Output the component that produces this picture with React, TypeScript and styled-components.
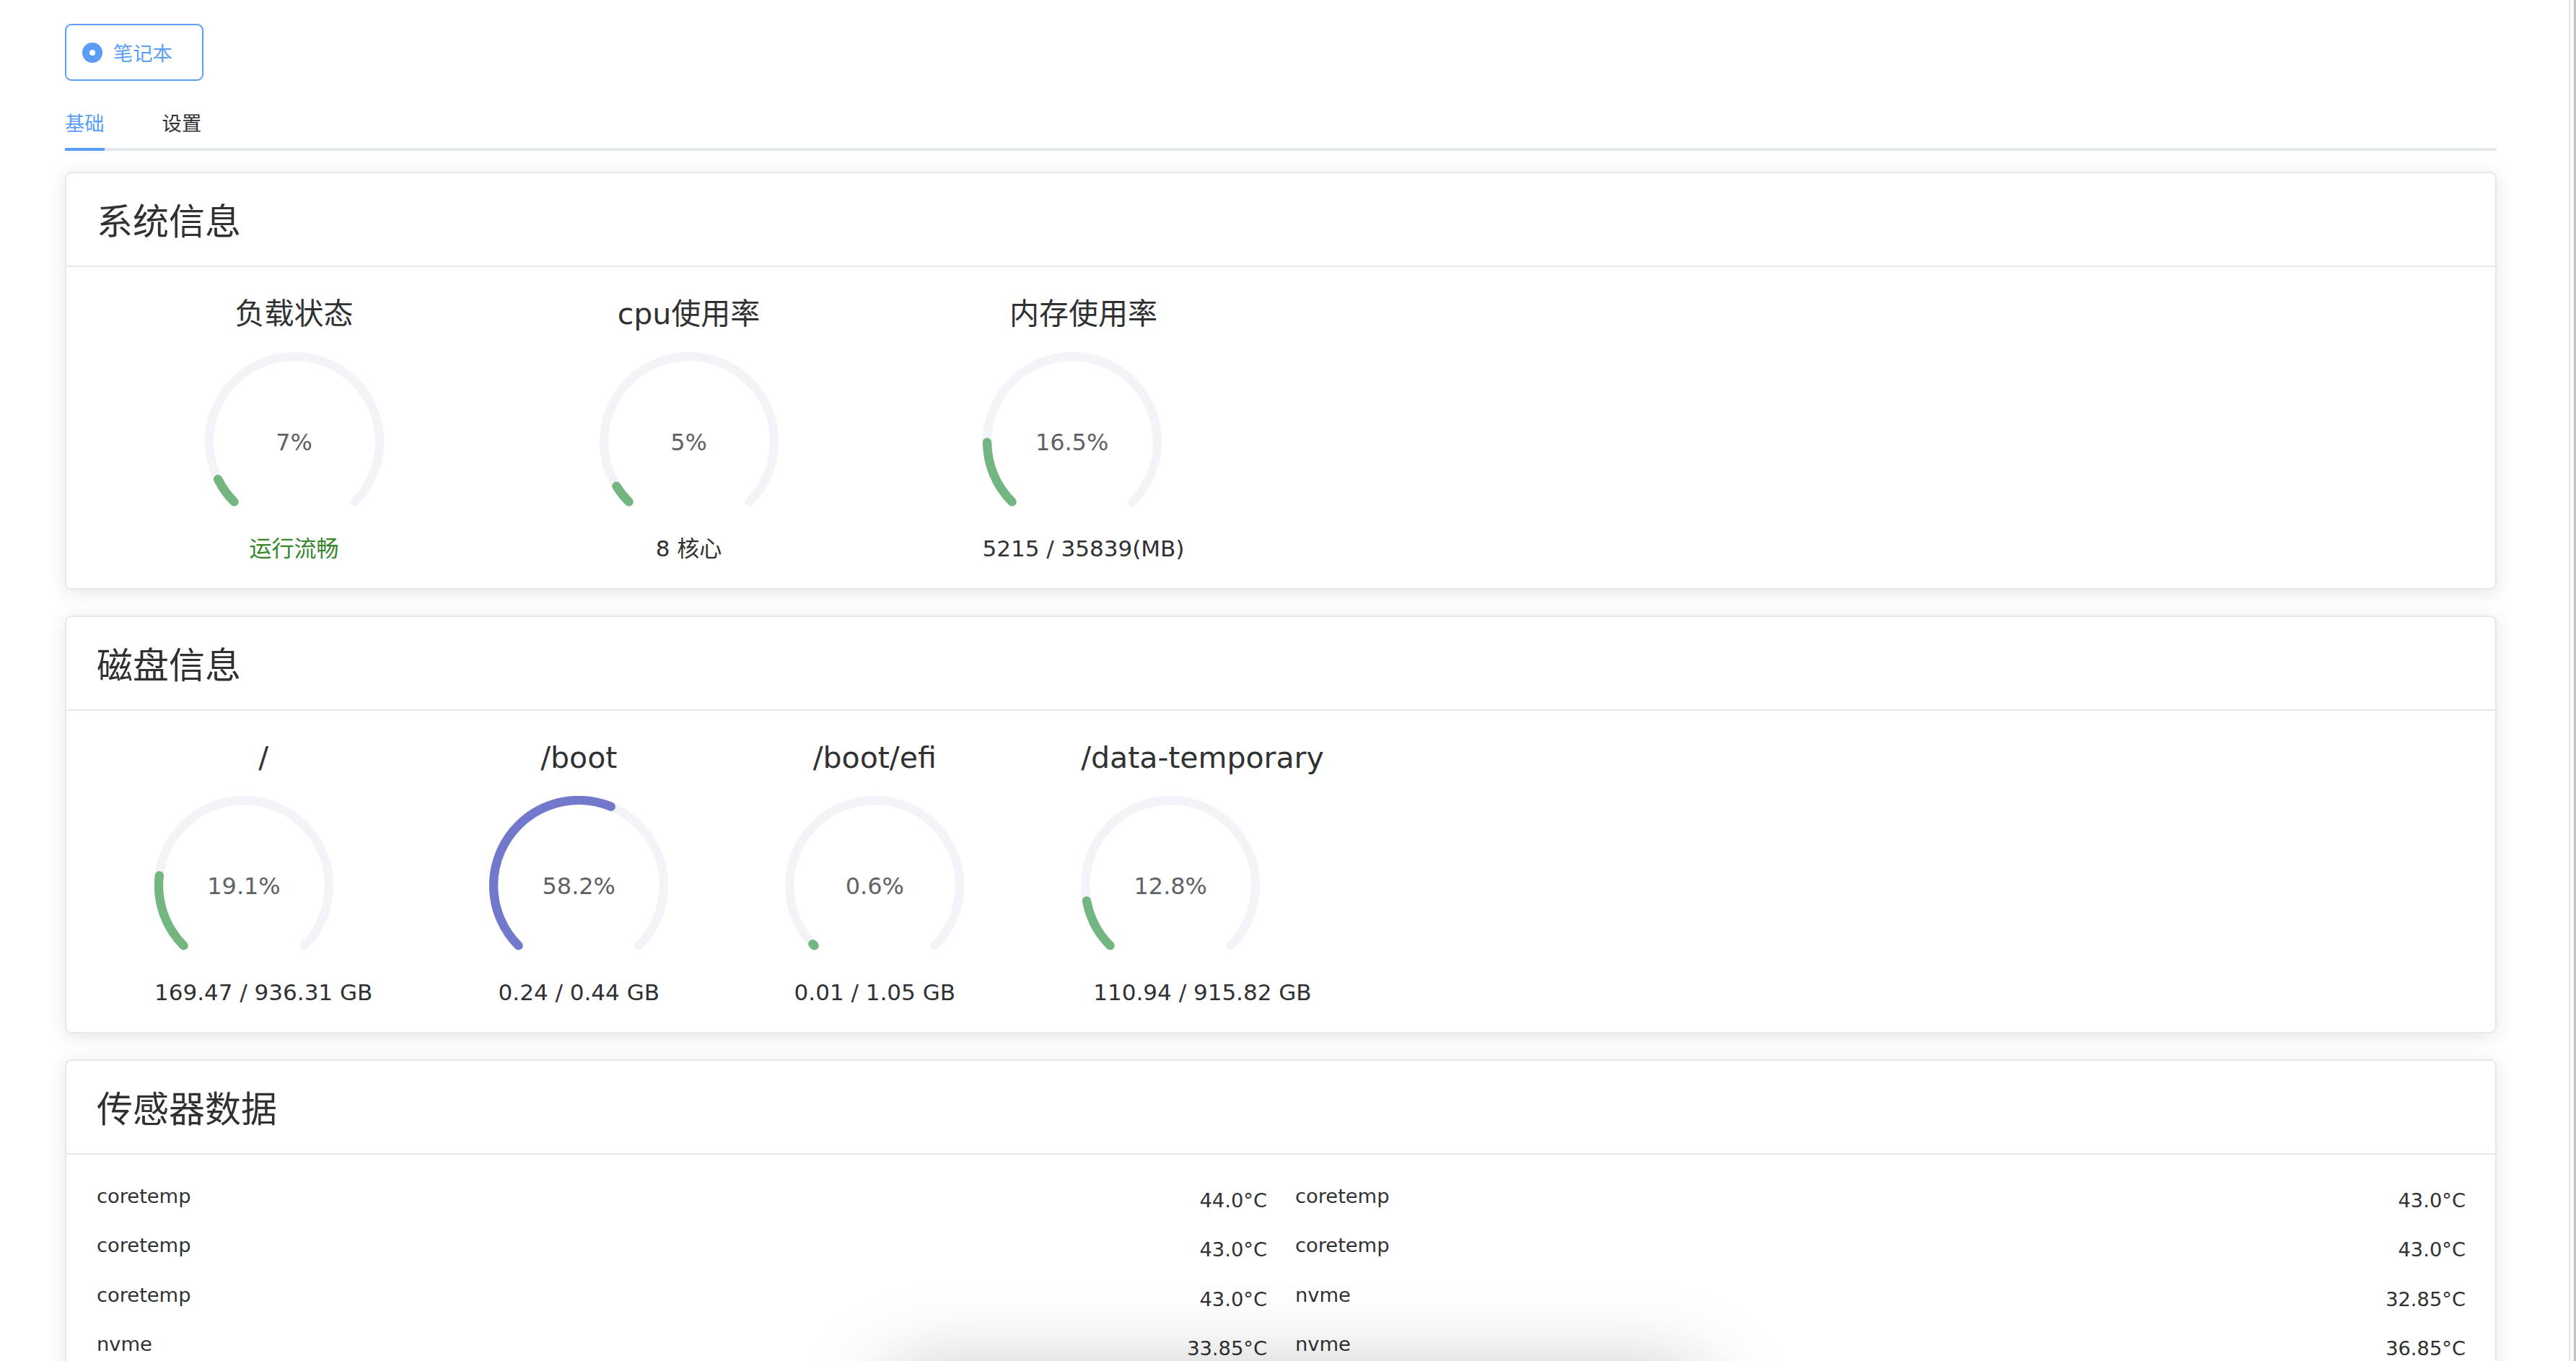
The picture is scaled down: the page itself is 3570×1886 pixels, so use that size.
import React from "react";
import styled, { createGlobalStyle, css } from "styled-components";

const BLUE = "#5a9ef7";
const GREEN = "#73b682";
const PURPLE = "#7279cc";
const TRACK = "#f3f4f8";
const TEXT = "#303133";
const LINE = "#e6e8ec";

const GlobalStyle = createGlobalStyle`
  html, body {
    margin: 0;
    padding: 0;
    background: #fff;
    overflow: hidden;
  }
  body {
    font-family: "DejaVu Sans", "Noto Sans CJK SC", sans-serif;
    color: ${TEXT};
  }
  *, *::before, *::after { box-sizing: border-box; }
`;

const Page = styled.div`
  display: flex;
  height: 100vh;
  overflow: hidden;
`;

const Main = styled.main`
  flex: 1;
  min-width: 0;
  padding: 33px 100px 0 90px;
`;

const ScrollTrack = styled.div`
  flex-shrink: 0;
  width: 10px;
  background: #fafafa;
  border-left: 2px solid #e8e8e8;
  border-right: 3px solid #c2c2c2;
`;

const RadioButton = styled.label`
  display: inline-flex;
  align-items: center;
  gap: 15px;
  height: 79px;
  padding: 0 41px 0 22px;
  border: 2px solid ${BLUE};
  border-radius: 9px;
  cursor: pointer;
`;

const RadioDot = styled.span`
  display: flex;
  align-items: center;
  justify-content: center;
  width: 28px;
  height: 28px;
  border-radius: 50%;
  background: ${BLUE};
  &::after {
    content: "";
    width: 8px;
    height: 8px;
    border-radius: 50%;
    background: #fff;
  }
`;

const RadioLabel = styled.span`
  margin-top: 4px;
  font-size: 27.3px;
  line-height: 1;
  color: ${BLUE};
`;

const TabNav = styled.nav`
  display: flex;
  margin-top: 25px;
  border-bottom: 4px solid #e4e7ed;
`;

const TabItem = styled.div<{ $active?: boolean }>`
  position: relative;
  height: 68px;
  line-height: 70px;
  padding: 0 40px;
  font-size: 27.3px;
  color: ${(p) => (p.$active ? BLUE : TEXT)};
  cursor: pointer;
  &:first-child {
    padding-left: 0;
  }
  ${(p) =>
    p.$active &&
    css`
      &::after {
        content: "";
        position: absolute;
        left: 0;
        right: 40px;
        bottom: -4px;
        height: 4px;
        background: ${BLUE};
      }
    `}
`;

const CardStack = styled.div`
  display: flex;
  flex-direction: column;
  gap: 36px;
  margin-top: 29px;
`;

const Card = styled.section`
  background: #fff;
  border: 2px solid ${LINE};
  border-radius: 9px;
  box-shadow: 0 4.5px 27px 0 rgba(0, 0, 0, 0.1);
  overflow: hidden;
`;

const CardHeader = styled.header`
  height: 130px;
  padding: 40px 42px 0;
  border-bottom: 2px solid ${LINE};
`;

const CardTitle = styled.h2`
  margin: 0;
  font-size: 50px;
  line-height: 56px;
  font-weight: normal;
  color: ${TEXT};
`;

const SystemGrid = styled.div`
  display: grid;
  grid-template-columns: repeat(6, 547px);
  padding: 36px 42px 31px;
`;

const Cell = styled.div`
  display: flex;
  justify-content: center;
`;

const DiskRow = styled.div`
  display: flex;
  align-items: flex-start;
  gap: 162px;
  padding: 36px 42px 31px 122px;
`;

const GaugeItem = styled.div`
  display: flex;
  flex-direction: column;
  align-items: center;
`;

const ItemTitle = styled.div`
  font-size: 41px;
  line-height: 58px;
  color: ${TEXT};
  white-space: nowrap;
`;

const GaugeBox = styled.div`
  position: relative;
  align-self: flex-start;
  width: 248px;
  height: 248px;
  margin-top: 24px;
`;

const GaugeValue = styled.span`
  position: absolute;
  inset: 0;
  display: flex;
  align-items: center;
  justify-content: center;
  padding-top: 3px;
  font-size: 31.9px;
  line-height: 1;
  color: #606266;
`;

const ItemFoot = styled.div<{ $color?: string }>`
  font-size: 31px;
  line-height: 48px;
  color: ${(p) => p.$color ?? TEXT};
  white-space: nowrap;
`;

const SensorGrid = styled.div`
  display: grid;
  grid-template-columns: 1fr 1fr;
  column-gap: 39px;
  padding: 38px 41px 30px 42px;
`;

const SensorRow = styled.div`
  display: flex;
  justify-content: space-between;
  align-items: flex-start;
  height: 68.3px;
`;

const SensorName = styled.span`
  font-size: 27.3px;
  line-height: 40px;
  color: ${TEXT};
`;

const SensorValue = styled.span`
  font-size: 27.3px;
  line-height: 40px;
  margin-top: 6px;
  color: ${TEXT};
`;

const BottomShade = styled.div`
  position: fixed;
  left: 1230px;
  width: 1130px;
  bottom: -220px;
  height: 200px;
  border-radius: 30px;
  box-shadow: 0 0 120px 0 rgba(0, 0, 0, 0.26);
  pointer-events: none;
`;

type GaugeProps = { percent: number; color: string };

const Gauge: React.FC<GaugeProps> = ({ percent, color }) => {
  const size = 248;
  const c = size / 2;
  const r = 118;
  const sw = 12.3;
  const d = r * Math.SQRT1_2;
  const path = `M ${c - d} ${c + d} A ${r} ${r} 0 1 1 ${c + d} ${c + d}`;
  const len = 2 * Math.PI * r * 0.75;
  return (
    <svg width={size} height={size} viewBox={`0 0 ${size} ${size}`}>
      <path d={path} fill="none" stroke={TRACK} strokeWidth={sw} strokeLinecap="round" />
      <path
        d={path}
        fill="none"
        stroke={color}
        strokeWidth={sw}
        strokeLinecap="round"
        strokeDasharray={`${(len * percent) / 100} ${len * 2}`}
      />
    </svg>
  );
};

type Metric = {
  title: string;
  percent: number;
  foot: string;
  footColor?: string;
  color?: string;
};

const systemMetrics: Metric[] = [
  { title: "负载状态", percent: 7, foot: "运行流畅", footColor: "#35872a" },
  { title: "cpu使用率", percent: 5, foot: "8 核心" },
  { title: "内存使用率", percent: 16.5, foot: "5215 / 35839(MB)" },
];

const diskMetrics: Metric[] = [
  { title: "/", percent: 19.1, foot: "169.47 / 936.31 GB" },
  { title: "/boot", percent: 58.2, foot: "0.24 / 0.44 GB", color: PURPLE },
  { title: "/boot/efi", percent: 0.6, foot: "0.01 / 1.05 GB" },
  { title: "/data-temporary", percent: 12.8, foot: "110.94 / 915.82 GB" },
];

const sensors: { name: string; value: string }[] = [
  { name: "coretemp", value: "44.0°C" },
  { name: "coretemp", value: "43.0°C" },
  { name: "coretemp", value: "43.0°C" },
  { name: "coretemp", value: "43.0°C" },
  { name: "coretemp", value: "43.0°C" },
  { name: "nvme", value: "32.85°C" },
  { name: "nvme", value: "33.85°C" },
  { name: "nvme", value: "36.85°C" },
];

const MetricGauge: React.FC<{ m: Metric }> = ({ m }) => (
  <GaugeItem>
    <ItemTitle>{m.title}</ItemTitle>
    <GaugeBox>
      <Gauge percent={m.percent} color={m.color ?? GREEN} />
      <GaugeValue>{m.percent}%</GaugeValue>
    </GaugeBox>
    <ItemFoot $color={m.footColor}>{m.foot}</ItemFoot>
  </GaugeItem>
);

export default function App() {
  return (
    <>
      <GlobalStyle />
      <Page>
        <Main>
          <RadioButton>
            <RadioDot />
            <RadioLabel>笔记本</RadioLabel>
          </RadioButton>
          <TabNav>
            <TabItem $active>基础</TabItem>
            <TabItem>设置</TabItem>
          </TabNav>
          <CardStack>
            <Card>
              <CardHeader>
                <CardTitle>系统信息</CardTitle>
              </CardHeader>
              <SystemGrid>
                {systemMetrics.map((m) => (
                  <Cell key={m.title}>
                    <MetricGauge m={m} />
                  </Cell>
                ))}
              </SystemGrid>
            </Card>
            <Card>
              <CardHeader>
                <CardTitle>磁盘信息</CardTitle>
              </CardHeader>
              <DiskRow>
                {diskMetrics.map((m) => (
                  <MetricGauge key={m.title} m={m} />
                ))}
              </DiskRow>
            </Card>
            <Card>
              <CardHeader>
                <CardTitle>传感器数据</CardTitle>
              </CardHeader>
              <SensorGrid>
                {sensors.map((s, i) => (
                  <SensorRow key={i}>
                    <SensorName>{s.name}</SensorName>
                    <SensorValue>{s.value}</SensorValue>
                  </SensorRow>
                ))}
              </SensorGrid>
            </Card>
          </CardStack>
        </Main>
        <ScrollTrack />
      </Page>
      <BottomShade />
    </>
  );
}
